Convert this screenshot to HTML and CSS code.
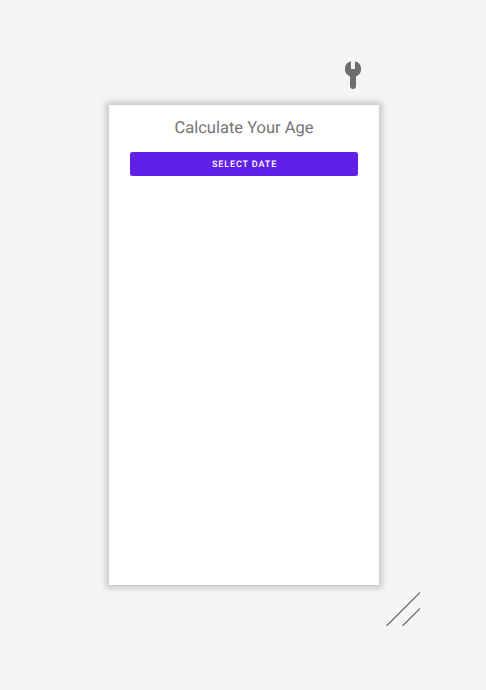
FILE: index.html
```html
<!DOCTYPE html>
<html lang="en">
<head>
<meta charset="utf-8">
<title>Calculate Your Age</title>
<link rel="stylesheet" href="styles.css">
</head>
<body>
<main class="surface">
  <div class="tools">
    <svg class="wrench" viewBox="0 0 16 28" aria-hidden="true"><path d="M6 0.2V7.4Q6 8 6.6 8H9.4Q10 8 10 7.4V0.2A8 8 0 0 1 11 15.4V25A3 3 0 0 1 5 25V15.4A8 8 0 0 1 6 0.2Z"/></svg>
  </div>
  <section class="screen">
    <h1 class="title">Calculate Your Age</h1>
    <button class="select" type="button">SELECT DATE</button>
  </section>
  <div class="resize">
    <svg class="handle" viewBox="0 0 34 34" aria-hidden="true"><path d="M0.5 34L34 0.5M16.5 34L34 16.5"/></svg>
  </div>
</main>
</body>
</html>
```
FILE: styles.css
```css
* { box-sizing: border-box; }
body {
  margin: 0;
  background: #f5f5f5;
  font-family: Roboto, "Liberation Sans", sans-serif;
  text-rendering: geometricPrecision;
}
.surface {
  min-height: 690px;
  width: 486px;
  padding: 61px 66px 0 109px;
}
.tools {
  display: flex;
  justify-content: flex-end;
  height: 44px;
  padding-right: 59px;
}
.wrench {
  width: 16px;
  height: 28px;
  fill: #6e6e6e;
}
.screen {
  display: flex;
  flex-direction: column;
  width: 270px;
  height: 480px;
  padding: 13px 21px 0;
  background: #fff;
  box-shadow: 0 0 6px 3px rgba(0, 0, 0, 0.2);
}
.title {
  margin: 0;
  font-size: 16.5px;
  font-weight: 400;
  line-height: 22px;
  text-align: center;
  color: #757575;
}
.select {
  height: 24px;
  margin: 12px 0 0;
  padding: 2px 0 0 1px;
  border: 0;
  border-radius: 2.5px;
  background: #6120e9;
  color: #fff;
  font: 500 9px/22px Roboto, "Liberation Sans", sans-serif;
  letter-spacing: 0.88px;
  text-rendering: geometricPrecision;
}
.resize {
  display: flex;
  justify-content: flex-end;
  padding-top: 7px;
}
.handle {
  width: 34px;
  height: 34px;
  fill: none;
  stroke: #666;
  stroke-width: 1.2;
}
```
